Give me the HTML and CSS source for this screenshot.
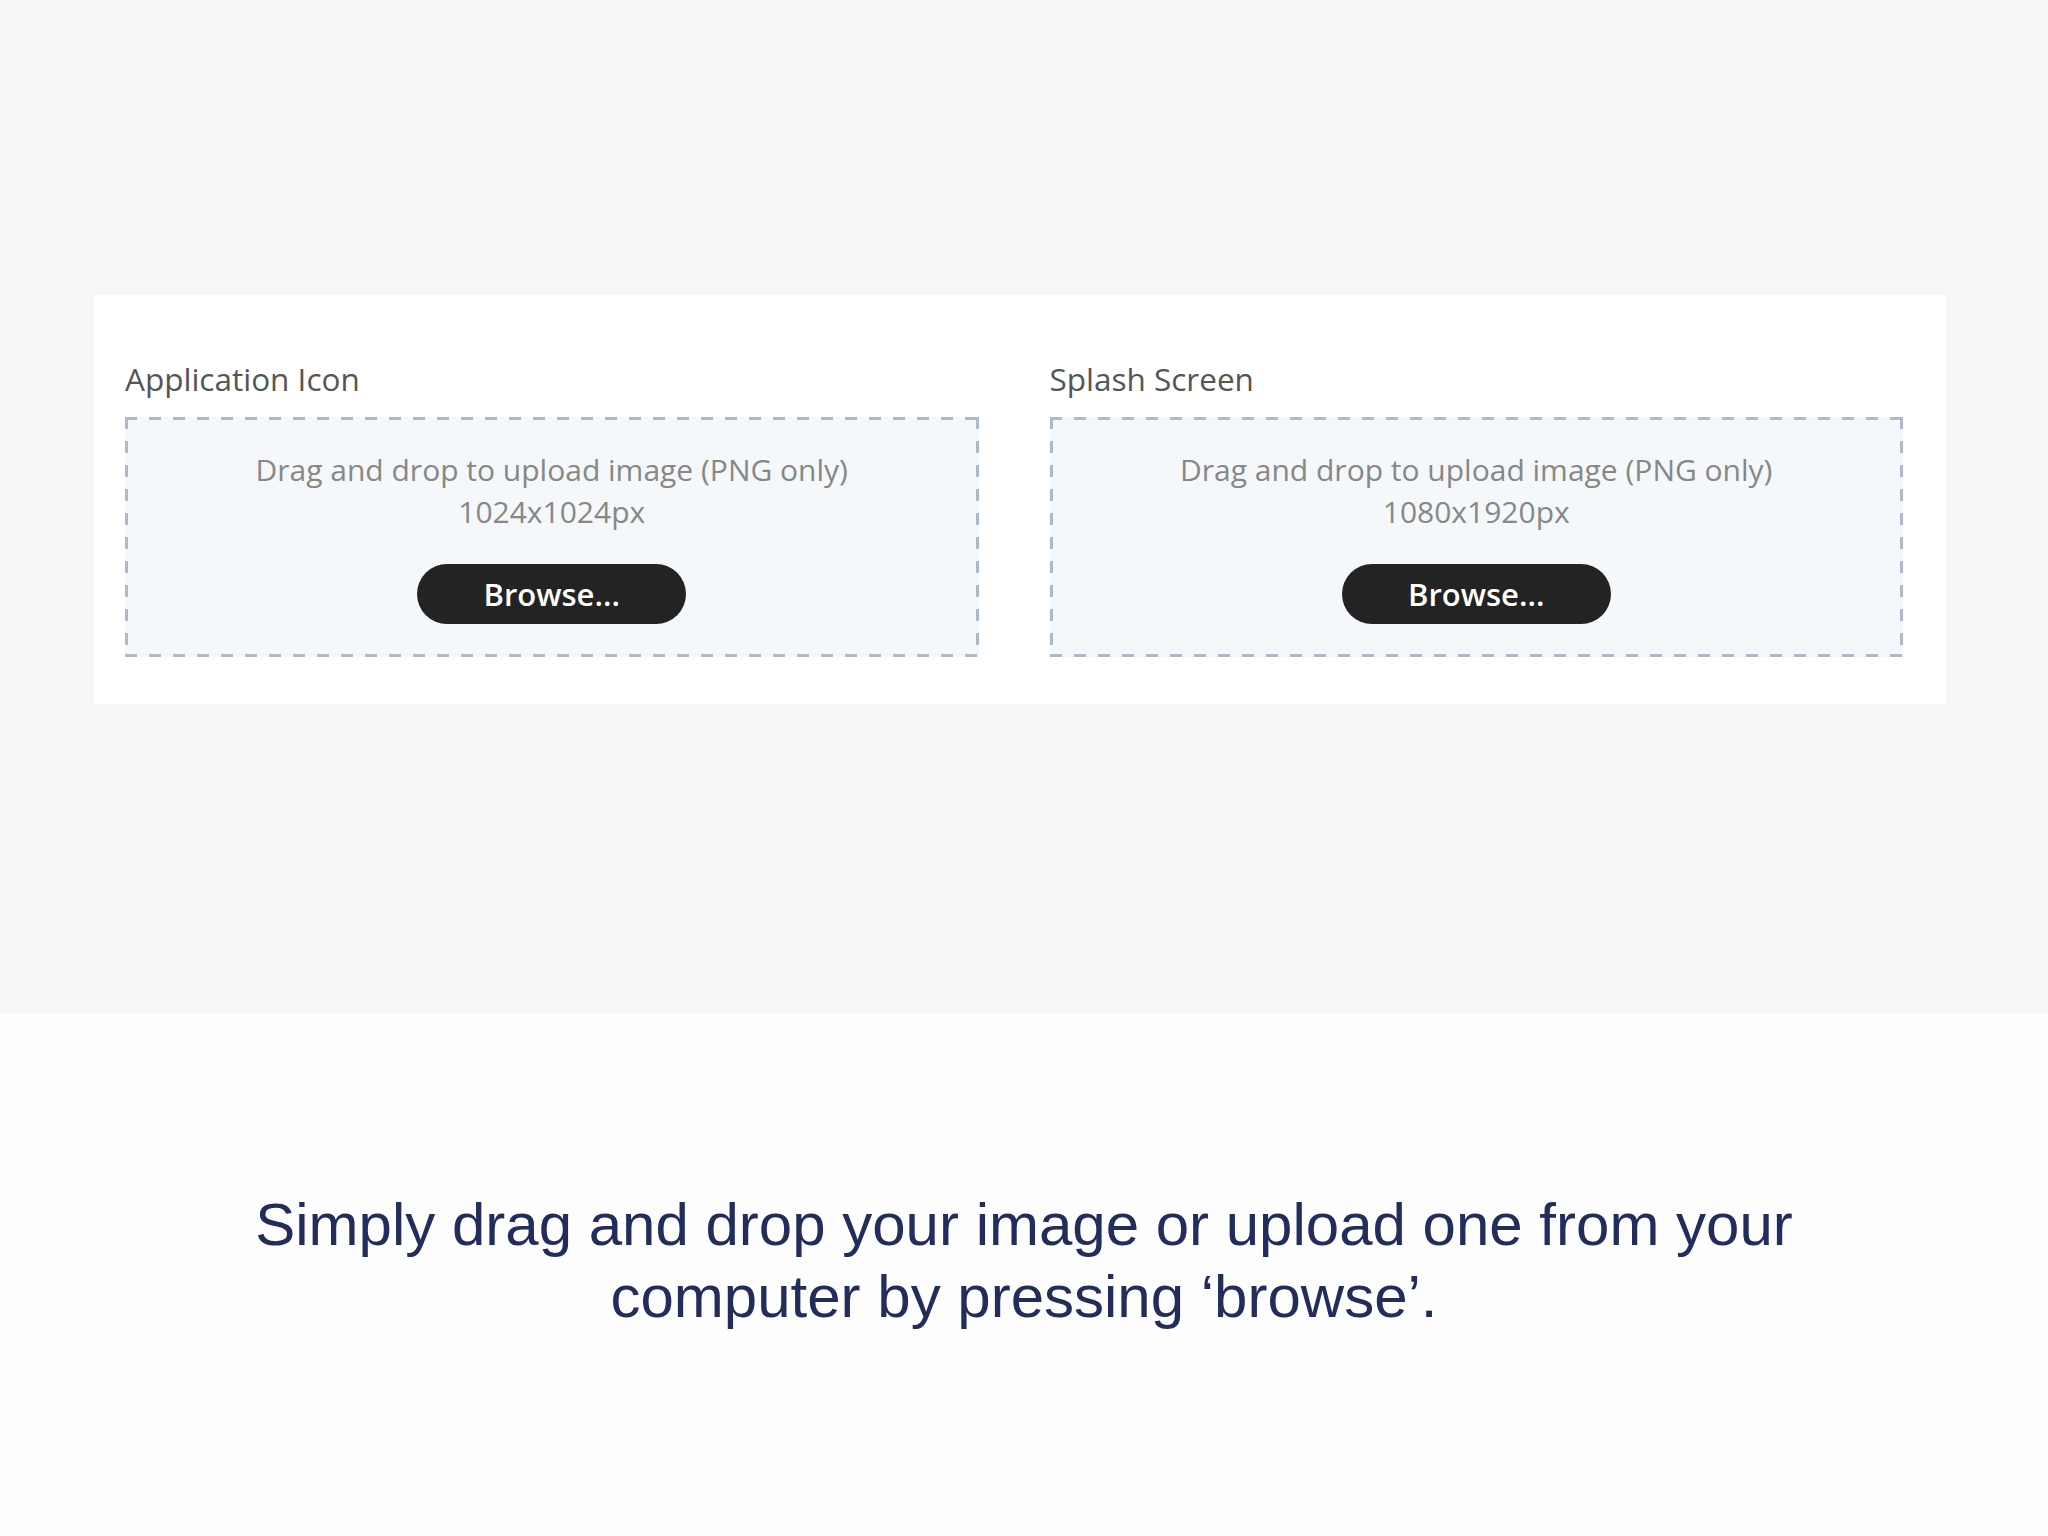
FILE: index.html
```html
<!DOCTYPE html>
<html lang="en">
<head>
<meta charset="UTF-8" />
<meta name="viewport" content="width=device-width, initial-scale=1" />
<title>Upload Images</title>
<link rel="stylesheet" href="styles.css">
</head>
<body>

<!-- Upload panel -->
<div class="stage">
  <div class="card">
    <div class="field">
      <div class="field-label">Application Icon</div>
      <div class="dropzone">
        <p class="drop-text">Drag and drop to upload image (PNG only)</p>
        <p class="drop-text">1024x1024px</p>
        <button class="browse">Browse...</button>
      </div>
    </div>
    <div class="field">
      <div class="field-label">Splash Screen</div>
      <div class="dropzone">
        <p class="drop-text">Drag and drop to upload image (PNG only)</p>
        <p class="drop-text">1080x1920px</p>
        <button class="browse">Browse...</button>
      </div>
    </div>
  </div>
</div>

<!-- Caption -->
<div class="caption">
  <p>Simply drag and drop your image or upload one from your<br>computer by pressing &lsquo;browse&rsquo;.</p>
</div>

</body>
</html>
```

FILE: styles.css
```css
body {
  margin: 0;
  background: #fdfdfd;
  font-family: "Open Sans", "Noto Sans", sans-serif;
}
.stage {
  height: 1013px;
  box-sizing: border-box;
  padding: 295px 102px 0 94px;
  background: #f6f6f6;
}
.card {
  display: grid;
  grid-template-columns: 1fr 1fr;
  column-gap: 71px;
  padding: 63px 43px 47px 31px;
  background: #ffffff;
}
.field-label {
  font-size: 31.5px;
  line-height: 42px;
  color: #555555;
  margin-bottom: 17px;
}
/* long dashes drawn with gradients, the default dashed border is too fine */
.dropzone {
  padding: 32px 0 33px;
  text-align: center;
  background:
    repeating-linear-gradient(90deg, #adbacd 0 12px, transparent 12px 24px) top left / 100% 3px no-repeat,
    repeating-linear-gradient(90deg, #adbacd 0 12px, transparent 12px 24px) bottom left / 100% 3px no-repeat,
    repeating-linear-gradient(180deg, #adbacd 0 12px, transparent 12px 24px) top left / 3px 100% no-repeat,
    repeating-linear-gradient(180deg, #adbacd 0 12px, transparent 12px 24px) top right / 3px 100% no-repeat,
    #f4f8fa;
}
.drop-text {
  margin: 0;
  font-size: 30px;
  line-height: 42px;
  color: #878787;
}
.browse {
  display: block;
  margin: 31px auto 0;
  width: 269px;
  height: 60px;
  border: none;
  border-radius: 30px;
  background: #232323;
  color: #ffffff;
  font-family: "Open Sans", "Noto Sans", sans-serif;
  font-size: 31px;
  font-weight: 600;
  cursor: pointer;
}
.caption {
  padding-top: 176px;
  text-align: center;
}
.caption p {
  margin: 0;
  font-family: "Liberation Sans", Arial, sans-serif;
  font-size: 60px;
  line-height: 72px;
  color: #222d5b;
}
```
